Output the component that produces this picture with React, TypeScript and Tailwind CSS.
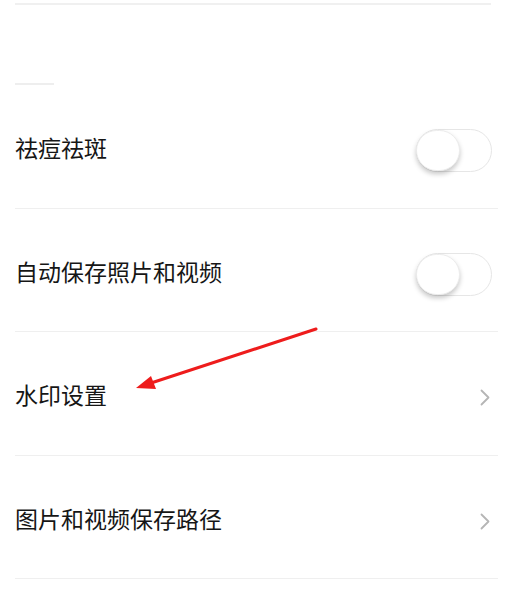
import React from "react";

type Row = {
  label: string;
  kind: "toggle" | "link";
};

const rows: Row[] = [
  { label: "祛痘祛斑", kind: "toggle" },
  { label: "自动保存照片和视频", kind: "toggle" },
  { label: "水印设置", kind: "link" },
  { label: "图片和视频保存路径", kind: "link" },
];

function Toggle() {
  return (
    <div className="relative h-[43px] w-[76px] rounded-full border-[1.5px] border-[#e6e6e6] bg-white">
      <div className="absolute left-[-1px] top-[0px] h-[41px] w-[44px] rounded-full border border-[#ececec] bg-white shadow-[0_3px_5px_rgba(0,0,0,0.22)]" />
    </div>
  );
}

function Chevron() {
  return (
    <svg width="10" height="17" viewBox="0 0 10 17" fill="none" className="mr-[2px]">
      <path d="M1.5 1.5 L8.5 8.5 L1.5 15.5" stroke="#b5b5b5" strokeWidth="1.8" strokeLinecap="round" strokeLinejoin="round" />
    </svg>
  );
}

export default function App() {
  return (
    <div
      className="relative h-[595px] w-full overflow-hidden bg-white"
      style={{ fontFamily: '"Noto Sans CJK SC", "Noto Sans", sans-serif' }}
    >
      <div className="ml-[15px] mt-[3px] h-[2px] w-[476px] bg-[#f0f0f0]" />
      <div className="ml-[15px] mt-[78px] h-[2px] w-[39px] bg-[#eeeeee]" />

      {rows.map((row) => (
        <div
          key={row.label}
          className="ml-[15px] flex h-[123.5px] w-[483px] items-center justify-between border-b border-[#efefef] pt-[9px]"
        >
          <span className="relative top-[-3px] text-[23px] leading-none text-[#161616]">{row.label}</span>
          <div className="flex items-center pr-[6px]">
            {row.kind === "toggle" ? <Toggle /> : <Chevron />}
          </div>
        </div>
      ))}

      <svg className="pointer-events-none absolute left-0 top-0" width="532" height="595" viewBox="0 0 532 595">
        <line x1="316" y1="329" x2="148" y2="384" stroke="#ee1c1c" strokeWidth="3" strokeLinecap="round" />
        <polygon points="136,388 151,376 156,389" fill="#ee1c1c" />
      </svg>
    </div>
  );
}
